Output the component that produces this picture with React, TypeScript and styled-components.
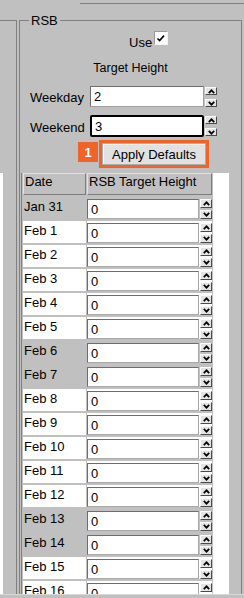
import styled, { createGlobalStyle } from "styled-components";

const GlobalStyle = createGlobalStyle`
  html, body {
    margin: 0;
    padding: 0;
    background: #c0c0c0;
  }
  body {
    font-family: "Liberation Sans", Arial, sans-serif;
    font-size: 13px;
    color: #000;
  }
`;

const Page = styled.div`
  width: 244px;
  height: 598px;
  overflow: hidden;
  display: flex;
  flex-direction: column;
  background: #c0c0c0;
`;

const Viewport = styled.div`
  height: 594px;
  flex: none;
  overflow: hidden;
  display: flex;
  flex-direction: column;
`;

const BottomEdge = styled.div`
  flex: 1;
  border-top: 1px solid #d8d8d8;
`;

const TopRule = styled.div`
  flex: none;
  height: 1px;
  margin: 3px 0 0 80px;
  background: #808080;
`;

const Columns = styled.div`
  display: flex;
  align-items: flex-start;
  gap: 2px;
`;

const SidePanel = styled.div`
  width: 17px;
  height: 600px;
  box-sizing: border-box;
  margin-top: 16px;
  border-top: 1px solid #808080;
  border-right: 1px solid #808080;
  display: flex;
  flex-direction: column;
`;

const SideStub = styled.div`
  width: 3px;
  height: 440px;
  margin-top: 152px;
  background: #fff;
`;

const Group = styled.fieldset`
  flex: 1;
  min-width: 0;
  margin: 9px 2px 0 0;
  padding: 0 0 40px;
  border: 1px solid #808080;
  display: flex;
  flex-direction: column;
`;

const Legend = styled.legend`
  margin-left: 9px;
  padding: 0 2px;
  line-height: 15px;
  font-size: 13px;
`;

const UseRow = styled.div`
  display: flex;
  align-items: flex-start;
  gap: 2px;
  margin-top: 3px;
  padding-left: 109px;
`;

const UseText = styled.span`
  margin-top: 4px;
  line-height: 15px;
`;

const CheckBox = styled.span`
  width: 14px;
  height: 14px;
  box-sizing: border-box;
  background: #fff;
  border: 1px solid;
  border-color: #9a9a9a #f4f4f4 #f4f4f4 #9a9a9a;
  display: flex;
  align-items: center;
  justify-content: center;
`;

const SubTitle = styled.div`
  margin-top: 11px;
  line-height: 15px;
  font-size: 12.5px;
  text-align: center;
`;

const FieldRow = styled.div<{ $gap: number }>`
  display: flex;
  align-items: center;
  margin-top: ${(p) => p.$gap}px;
  padding-left: 10px;
`;

const FieldLabel = styled.label`
  width: 60px;
  padding-top: 2px;
  line-height: 15px;
`;

const NumberBox = styled.input<{ $focused?: boolean }>`
  width: 114px;
  height: ${(p) => (p.$focused ? 22 : 21)}px;
  box-sizing: border-box;
  margin: 0;
  padding: 0 3px;
  font: inherit;
  color: #000;
  background: #fff;
  border: ${(p) => (p.$focused ? "2px solid #000" : "1px solid #a0a0a0")};
  border-top-color: ${(p) => (p.$focused ? "#000" : "#6d6d6d")};
  border-left-color: ${(p) => (p.$focused ? "#000" : "#6d6d6d")};
  border-radius: ${(p) => (p.$focused ? "2px" : "0")};
  outline: none;
`;

const Spinner = styled.div<{ $compact?: boolean }>`
  display: flex;
  flex-direction: column;
  align-self: flex-start;
  gap: ${(p) => (p.$compact ? 2 : 4)}px;
  padding-top: ${(p) => (p.$compact ? 0 : 1)}px;
  margin-left: 1px;
`;

const SpinButton = styled.span<{ $compact?: boolean }>`
  width: 12px;
  height: ${(p) => (p.$compact ? 9 : 8)}px;
  box-sizing: border-box;
  background: #e4e4e4;
  border: 1px solid;
  border-color: #fafafa #4a4a4a #4a4a4a #fafafa;
  display: flex;
  align-items: center;
  justify-content: center;
`;

const ApplyRow = styled.div`
  display: flex;
  align-items: flex-start;
  gap: 1px;
  margin-top: 3px;
  padding-left: 58px;
`;

const Badge = styled.span`
  width: 20px;
  height: 20px;
  margin-top: 2px;
  background: #f0642a;
  color: #fff;
  font-weight: bold;
  font-size: 13px;
  display: flex;
  align-items: center;
  justify-content: center;
`;

const Highlight = styled.div`
  border: 3px solid #f0642a;
  display: flex;
`;

const PlainButton = styled.button`
  width: 104px;
  height: 22px;
  margin: 0;
  padding: 0;
  font: inherit;
  color: #000;
  background: #e1e1e1;
  border: 1px solid #adadad;
  box-shadow: inset 1px 1px 0 #f4f4f4;
`;

const TableBox = styled.div`
  margin: 5px 0 0 1px;
  width: 208px;
  box-sizing: border-box;
  background: #fff;
  border-left: 1px solid #808080;
`;

const Grid = styled.table`
  border-collapse: separate;
  border-spacing: 1px 2px;
  margin-top: -2px;
  background: #c0c0c0;
  font-size: 13px;
  tr {
    height: 22px;
  }
`;

const HeadCell = styled.th<{ $w: number }>`
  width: ${(p) => p.$w}px;
  box-sizing: border-box;
  padding: 0 1px;
  text-align: left;
  vertical-align: top;
  font-weight: normal;
  line-height: 15px;
  background: #c0c0c0;
  border: 1px solid;
  border-color: #e2e2e2 #7c7c7c #7c7c7c #e2e2e2;
`;

const DateCell = styled.td<{ $weekend: boolean }>`
  padding: 2px 1px 0;
  vertical-align: top;
  line-height: 15px;
  background: ${(p) => (p.$weekend ? "#c0c0c0" : "#fff")};
`;

const ValueCell = styled.td<{ $weekend: boolean }>`
  padding: 2px 0 0;
  vertical-align: top;
  background: ${(p) => (p.$weekend ? "#c0c0c0" : "#fff")};
`;

const CellInputs = styled.div`
  display: flex;
`;

const CellBox = styled.input`
  width: 112px;
  height: 20px;
  box-sizing: border-box;
  margin: 0;
  padding: 0 3px;
  font: inherit;
  color: #000;
  background: #fff;
  border: 1px solid #a8a8a8;
  border-top-color: #6d6d6d;
  border-left-color: #6d6d6d;
  outline: none;
`;

const Chevron = ({ up }: { up?: boolean }) => (
  <svg width="7" height="5" viewBox="0 0 7 5">
    <path
      d={up ? "M0.8 4.2 L3.5 1.3 L6.2 4.2" : "M0.8 0.8 L3.5 3.7 L6.2 0.8"}
      fill="none"
      stroke="#000"
      strokeWidth="1.7"
    />
  </svg>
);

const Spin = ({ compact }: { compact?: boolean }) => (
  <Spinner $compact={compact}>
    <SpinButton $compact={compact}>
      <Chevron up />
    </SpinButton>
    <SpinButton $compact={compact}>
      <Chevron />
    </SpinButton>
  </Spinner>
);

const days = [
  { label: "Jan 31", weekend: true },
  { label: "Feb 1", weekend: false },
  { label: "Feb 2", weekend: false },
  { label: "Feb 3", weekend: false },
  { label: "Feb 4", weekend: false },
  { label: "Feb 5", weekend: false },
  { label: "Feb 6", weekend: true },
  { label: "Feb 7", weekend: true },
  { label: "Feb 8", weekend: false },
  { label: "Feb 9", weekend: false },
  { label: "Feb 10", weekend: false },
  { label: "Feb 11", weekend: false },
  { label: "Feb 12", weekend: false },
  { label: "Feb 13", weekend: true },
  { label: "Feb 14", weekend: true },
  { label: "Feb 15", weekend: false },
  { label: "Feb 16", weekend: false },
  { label: "Feb 17", weekend: false },
];

export default function App() {
  return (
    <Page>
      <GlobalStyle />
      <Viewport>
        <TopRule />
        <Columns>
          <SidePanel>
            <SideStub />
          </SidePanel>
          <Group>
            <Legend>RSB</Legend>
            <UseRow>
              <UseText>Use</UseText>
              <CheckBox>
                <svg width="10" height="10" viewBox="0 0 10 10">
                  <path d="M1.5 5.5 L3.6 7.6 L8 2.6" fill="none" stroke="#000" strokeWidth="1.6" />
                </svg>
              </CheckBox>
            </UseRow>
            <SubTitle>Target Height</SubTitle>
            <FieldRow $gap={10}>
              <FieldLabel>Weekday</FieldLabel>
              <NumberBox defaultValue="2" />
              <Spin />
            </FieldRow>
            <FieldRow $gap={8}>
              <FieldLabel>Weekend</FieldLabel>
              <NumberBox $focused defaultValue="3" />
              <Spin />
            </FieldRow>
            <ApplyRow>
              <Badge>1</Badge>
              <Highlight>
                <PlainButton>Apply Defaults</PlainButton>
              </Highlight>
            </ApplyRow>
            <TableBox>
              <Grid>
                <thead>
                  <tr>
                    <HeadCell $w={63}>Date</HeadCell>
                    <HeadCell $w={124}>RSB Target Height</HeadCell>
                  </tr>
                </thead>
                <tbody>
                  {days.map((d) => (
                    <tr key={d.label}>
                      <DateCell $weekend={d.weekend}>{d.label}</DateCell>
                      <ValueCell $weekend={d.weekend}>
                        <CellInputs>
                          <CellBox defaultValue="0" />
                          <Spin compact />
                        </CellInputs>
                      </ValueCell>
                    </tr>
                  ))}
                </tbody>
              </Grid>
            </TableBox>
          </Group>
        </Columns>
      </Viewport>
      <BottomEdge />
    </Page>
  );
}
